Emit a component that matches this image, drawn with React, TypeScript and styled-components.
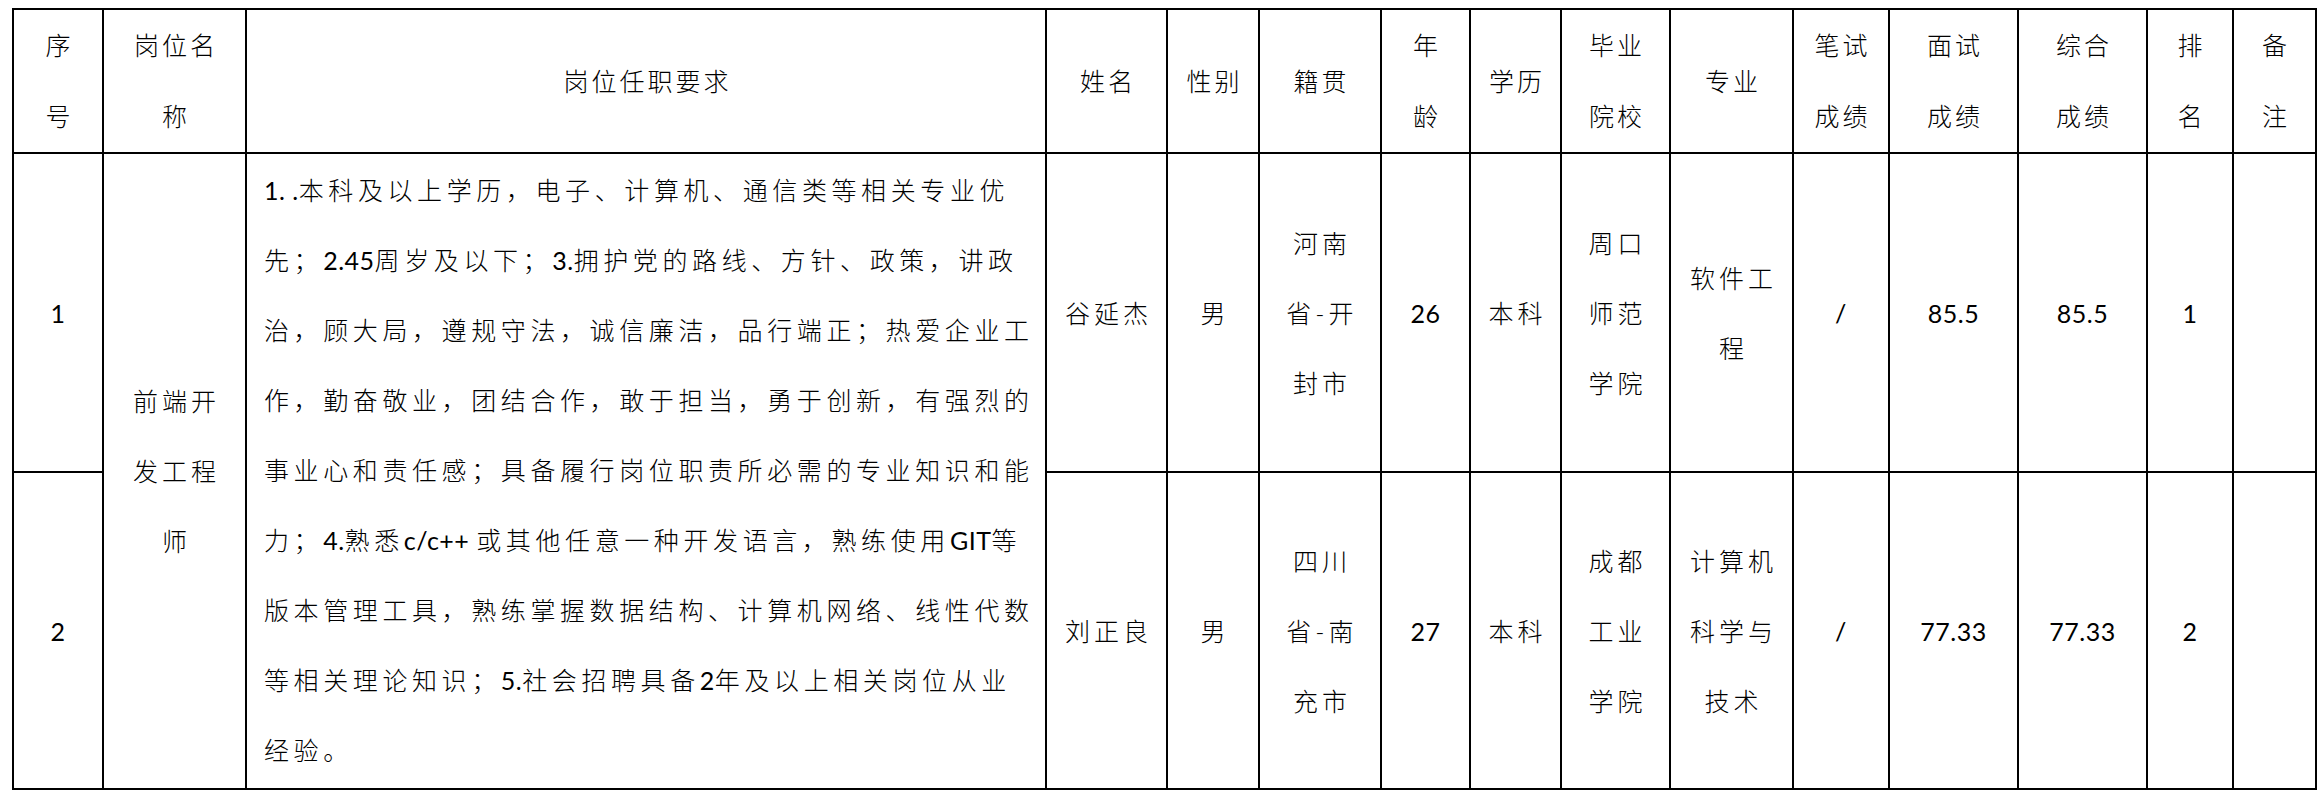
import React, { ReactNode } from 'react';
import styled, { createGlobalStyle, css } from 'styled-components';

const GlobalStyle = createGlobalStyle`
  body {
    margin: 0;
    background: #fff;
  }
`;

const Page = styled.div`
  padding: 8px 0 0 12px;
`;

const Table = styled.table`
  border-collapse: collapse;
  table-layout: fixed;
  width: 2305px;
  font-family: Lato, 'Noto Sans CJK SC', sans-serif;
  font-size: 25px;
  font-weight: 300;
  color: #000;
`;

const cellBase = css`
  border: 2px solid #000;
  padding: 0;
  text-align: center;
  vertical-align: middle;
  line-height: 71px;
  white-space: nowrap;
`;

const HeadRow = styled.tr`
  height: 143px;
`;

const BodyRow = styled.tr<{ $height: number }>`
  height: ${(p) => p.$height}px;
`;

const HeadCell = styled.th`
  ${cellBase};
  font-weight: 300;
  letter-spacing: 3px;
  padding-left: 3px;
`;

const Cell = styled.td<{ $numeric?: boolean }>`
  ${cellBase};
  line-height: 70px;
  font-weight: ${(p) => (p.$numeric ? 400 : 300)};
  letter-spacing: ${(p) => (p.$numeric ? '0.5px' : '4px')};
  padding-left: ${(p) => (p.$numeric ? '0' : '4px')};
`;

const RequirementCell = styled.td`
  ${cellBase};
  text-align: left;
  vertical-align: top;
  padding: 1px 0 0 17px;
  line-height: 70px;
  letter-spacing: 4.6px;
`;

const ReqLine = styled.div`
  height: 70px;
`;

const Latin = styled.span`
  font-weight: 400;
  letter-spacing: 0.5px;
`;

const columns = [90, 143, 800, 121, 92, 122, 89, 91, 109, 123, 96, 129, 129, 86, 83];

const headers: string[][] = [
  ['序', '号'],
  ['岗位名', '称'],
  ['岗位任职要求'],
  ['姓名'],
  ['性别'],
  ['籍贯'],
  ['年', '龄'],
  ['学历'],
  ['毕业', '院校'],
  ['专业'],
  ['笔试', '成绩'],
  ['面试', '成绩'],
  ['综合', '成绩'],
  ['排', '名'],
  ['备', '注'],
];

const requirement = [
  '1. .本科及以上学历，电子、计算机、通信类等相关专业优',
  '先；2.45周岁及以下；3.拥护党的路线、方针、政策，讲政',
  '治，顾大局，遵规守法，诚信廉洁，品行端正；热爱企业工',
  '作，勤奋敬业，团结合作，敢于担当，勇于创新，有强烈的',
  '事业心和责任感；具备履行岗位职责所必需的专业知识和能',
  '力；4.熟悉c/c++ 或其他任意一种开发语言，熟练使用GIT等',
  '版本管理工具，熟练掌握数据结构、计算机网络、线性代数',
  '等相关理论知识；5.社会招聘具备2年及以上相关岗位从业',
  '经验。',
];

interface Candidate {
  no: string;
  name: string;
  gender: string;
  origin: string[];
  age: string;
  education: string;
  school: string[];
  major: string[];
  written: string;
  interview: string;
  total: string;
  rank: string;
  note: string;
  height: number;
}

const candidates: Candidate[] = [
  {
    no: '1',
    name: '谷延杰',
    gender: '男',
    origin: ['河南', '省-开', '封市'],
    age: '26',
    education: '本科',
    school: ['周口', '师范', '学院'],
    major: ['软件工', '程'],
    written: '/',
    interview: '85.5',
    total: '85.5',
    rank: '1',
    note: '',
    height: 319,
  },
  {
    no: '2',
    name: '刘正良',
    gender: '男',
    origin: ['四川', '省-南', '充市'],
    age: '27',
    education: '本科',
    school: ['成都', '工业', '学院'],
    major: ['计算机', '科学与', '技术'],
    written: '/',
    interview: '77.33',
    total: '77.33',
    rank: '2',
    note: '',
    height: 317,
  },
];

// latin runs keep their natural spacing, only the CJK text is spread out
const mixed = (text: string): ReactNode[] =>
  text
    .split(/([\x20-\x7e]+)/)
    .filter(Boolean)
    .map((part, i) => (/^[\x20-\x7e]+$/.test(part) ? <Latin key={i}>{part}</Latin> : part));

const lines = (parts: string[]) =>
  parts.map((p, i) => (
    <React.Fragment key={i}>
      {i > 0 && <br />}
      {p}
    </React.Fragment>
  ));

const App: React.FC = () => {
  return (
    <Page>
      <GlobalStyle />
      <Table>
        <colgroup>
          {columns.map((w, i) => (
            <col key={i} style={{ width: w }} />
          ))}
        </colgroup>
        <thead>
          <HeadRow>
            {headers.map((h, i) => (
              <HeadCell key={i}>{lines(h)}</HeadCell>
            ))}
          </HeadRow>
        </thead>
        <tbody>
          {candidates.map((c, idx) => (
            <BodyRow key={c.no} $height={c.height}>
              <Cell $numeric>{c.no}</Cell>
              {idx === 0 && (
                <>
                  <Cell rowSpan={2}>{lines(['前端开', '发工程', '师'])}</Cell>
                  <RequirementCell rowSpan={2}>
                    {requirement.map((line, i) => (
                      <ReqLine key={i}>{mixed(line)}</ReqLine>
                    ))}
                  </RequirementCell>
                </>
              )}
              <Cell>{c.name}</Cell>
              <Cell>{c.gender}</Cell>
              <Cell>{lines(c.origin)}</Cell>
              <Cell $numeric>{c.age}</Cell>
              <Cell>{c.education}</Cell>
              <Cell>{lines(c.school)}</Cell>
              <Cell>{lines(c.major)}</Cell>
              <Cell $numeric>{c.written}</Cell>
              <Cell $numeric>{c.interview}</Cell>
              <Cell $numeric>{c.total}</Cell>
              <Cell $numeric>{c.rank}</Cell>
              <Cell>{c.note}</Cell>
            </BodyRow>
          ))}
        </tbody>
      </Table>
    </Page>
  );
};

export default App;
